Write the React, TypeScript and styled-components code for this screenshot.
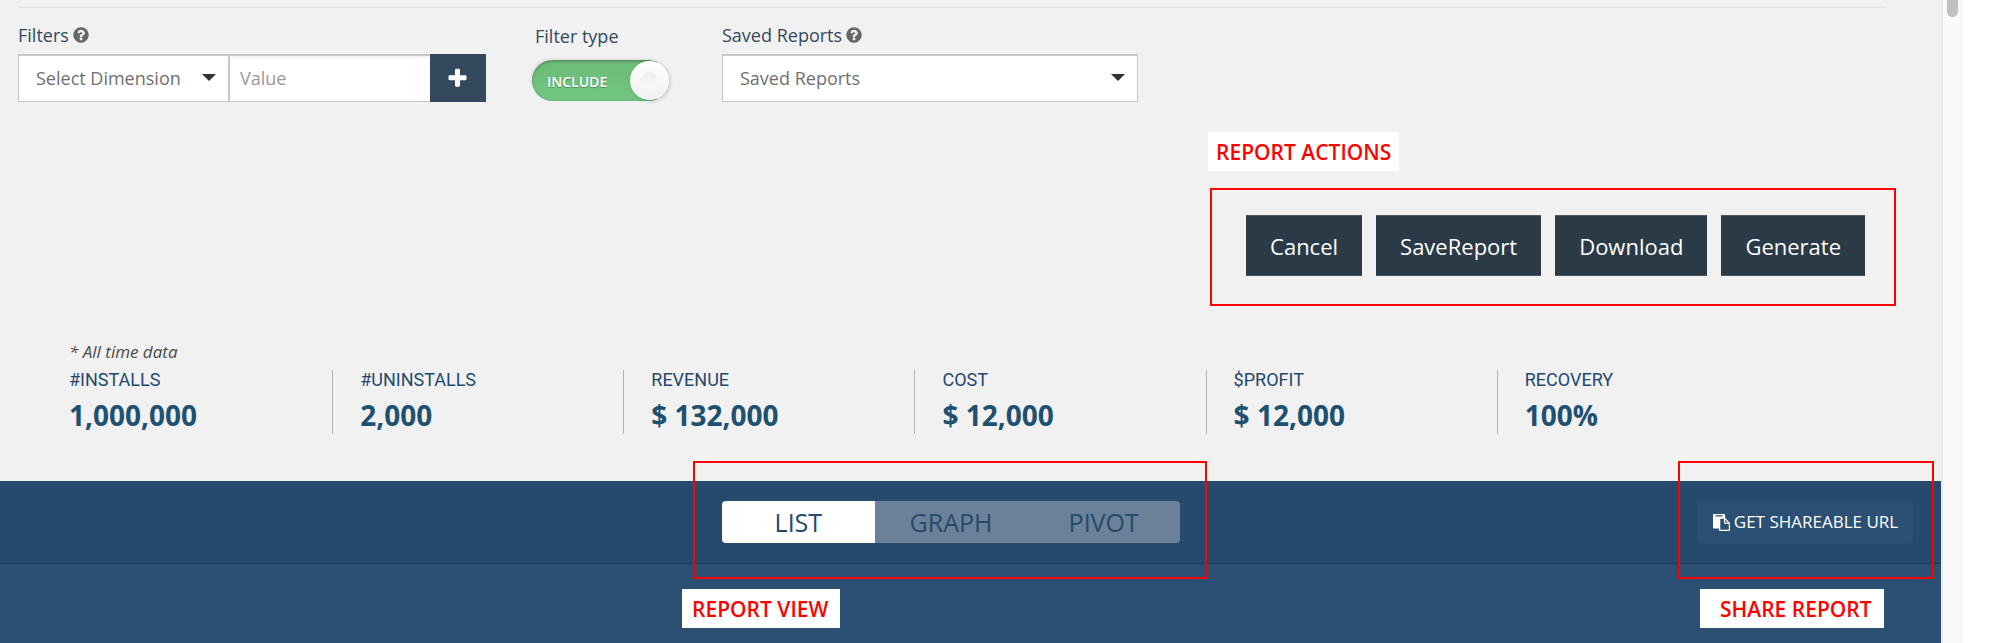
import React, { useState } from "react";
import styled, { createGlobalStyle, css } from "styled-components";

const GlobalStyle = createGlobalStyle`
  *, *::before, *::after { box-sizing: border-box; }
  body { margin: 0; background: #fff; font-family: "Open Sans", "Noto Sans", sans-serif; }
  button, input, select { font-family: inherit; }
`;

const Window = styled.div`
  display: flex;
  min-height: 100vh;
  padding-right: 38px;
`;

const Main = styled.main`
  flex: 1;
  min-width: 0;
  display: flex;
  flex-direction: column;
  background: #f1f1f1;
`;

const ScrollTrack = styled.div`
  width: 21px;
  flex: none;
  display: flex;
  justify-content: center;
  align-items: flex-start;
  background: #fafafa;
  border-left: 2px solid #e7e7e7;
  border-right: 1px solid #ececec;
`;

const ScrollThumb = styled.div`
  width: 11px;
  height: 17px;
  border-radius: 0 0 6px 6px;
  background: #c1c1c1;
`;

const Rule = styled.hr`
  margin: 7px 55px 0 18px;
  border: 0;
  border-top: 1px solid #e0e0e0;
`;

const Filters = styled.form`
  display: flex;
  align-items: flex-start;
  padding: 14px 18px 0;
`;

const Field = styled.div<{ $width: number; $gap?: number }>`
  width: ${(p) => p.$width}px;
  margin-right: ${(p) => p.$gap ?? 0}px;
`;

const FieldLabel = styled.label`
  display: flex;
  align-items: center;
  gap: 3px;
  height: 26px;
  margin-bottom: 6px;
  font-size: 18px;
  line-height: 26px;
  color: #34495e;
  svg { fill: #666; }
`;

const ToggleTitle = styled.div`
  padding: 1px 0 0 3px;
  margin-bottom: 11px;
  font-size: 18px;
  line-height: 26px;
  color: #34495e;
`;

const InputGroup = styled.div`
  display: flex;
  height: 48px;
`;

const SelectWrap = styled.div<{ $width?: number }>`
  position: relative;
  height: 48px;
  width: ${(p) => (p.$width ? `${p.$width}px` : "100%")};
  svg {
    position: absolute;
    right: 13px;
    top: 20px;
    fill: #333;
    pointer-events: none;
  }
`;

const Select = styled.select`
  appearance: none;
  width: 100%;
  height: 100%;
  padding: 0 30px 2px 17px;
  border: 1px solid #c8c8c8;
  border-top-width: 2px;
  border-radius: 0;
  background: #fff;
  color: #707070;
  font-size: 18px;
`;

const ValueInput = styled.input`
  flex: 1;
  min-width: 0;
  padding: 0 10px 2px;
  border: 1px solid #c8c8c8;
  border-top-width: 2px;
  border-right: 0;
  border-radius: 0;
  box-shadow: inset 0 2px 2px #0000000d;
  font-size: 18px;
  color: #555;
  &::placeholder { color: #999; opacity: 1; }
`;

const AddButton = styled.button`
  width: 56px;
  display: flex;
  align-items: center;
  justify-content: center;
  padding: 0 2px 0 0;
  border: 0;
  background: #34495e;
  svg { fill: #fff; }
`;

const Toggle = styled.label`
  display: flex;
  align-items: center;
  position: relative;
  width: 137px;
  height: 41px;
  padding: 2px 0 0 15px;
  border-radius: 21px;
  background: linear-gradient(#6dbb78, #72c681) 0 0 / 125px 100% no-repeat;
  box-shadow: -2px -2px 2px #e4e4e4;
  color: #fff;
  font-size: 14px;
  font-weight: 600;
  line-height: 20px;
  text-shadow: 0 1px 1px #0000004d;
  &::before {
    content: "";
    position: absolute;
    inset: 0 2px 0 0;
    border-radius: 21px;
    box-shadow: inset 0 1px 3px #00000059;
  }
  input {
    position: absolute;
    inset: 0;
    margin: 0;
    opacity: 0;
  }
`;

const Knob = styled.span<{ $on: boolean }>`
  position: absolute;
  top: 1px;
  ${(p) => (p.$on ? css`right: 0;` : css`left: 0;`)}
  display: flex;
  align-items: center;
  justify-content: center;
  width: 39px;
  height: 39px;
  border-radius: 50%;
  background: linear-gradient(#fff, #f0f0f0);
  box-shadow: 1px 1px 4px #00000033;
  &::before {
    content: "";
    width: 17px;
    height: 17px;
    border-radius: 50%;
    background: linear-gradient(#eee, #fbfbfb);
  }
`;

const Actions = styled.section`
  align-self: flex-end;
  display: flex;
  flex-direction: column;
  align-items: flex-start;
  margin: 30px 45px 0 0;
`;

const Callout = styled.strong<{ $left?: number; $right?: number }>`
  display: block;
  height: 39px;
  padding: 0 ${(p) => p.$right ?? 8}px 0 ${(p) => p.$left ?? 8}px;
  background: #fff;
  color: #f00;
  font-size: 21px;
  font-weight: 600;
  line-height: 40px;
  white-space: nowrap;
`;

const ActionFrame = styled.div`
  display: flex;
  gap: 14px;
  margin: 17px 0 0 2px;
  padding: 25px 29px 28px 34px;
  border: 2px solid #f00;
`;

const ActionButton = styled.button`
  height: 61px;
  padding: 0 24px;
  border: 1px solid #4a5763;
  border-width: 1px 0;
  background: #2b3a47;
  color: #fff;
  font-size: 22px;
`;

const StatsSection = styled.section`
  width: 90%;
  margin: 35px 0 47px 42px;
`;

const StatsNote = styled.em`
  display: block;
  padding-left: 27px;
  height: 29px;
  font-size: 17px;
  line-height: 22px;
  color: #4a4a4a;
`;

const Stats = styled.dl`
  display: grid;
  grid-template-columns: repeat(6, 1fr);
  margin: 0;
`;

const Stat = styled.div`
  height: 64px;
  padding-left: 27px;
  border-right: 1px solid #b5b5b5;
  color: #24496e;
  &:last-child { border-right: 0; }
  dt {
    font-family: Roboto, sans-serif;
    font-size: 18px;
    line-height: 20px;
  }
  dd {
    margin: 6px 0 0;
    font-size: 28px;
    font-weight: 700;
    line-height: 38px;
    color: #205070;
  }
`;

const ViewBar = styled.div`
  display: grid;
  grid-template-columns: 704px auto 1fr;
  align-items: center;
  height: 83px;
  padding: 0 28px 0 18px;
  background: #264a6d;
  border-bottom: 1px solid #1d3a58;
`;

const ReportBody = styled.div`
  flex: 1;
  min-height: 79px;
  background: #2c5073;
`;

const Annotated = styled.div<{ $column: number }>`
  position: relative;
  grid-column: ${(p) => p.$column};
  justify-self: ${(p) => (p.$column === 3 ? "end" : "start")};
`;

const Frame = styled.div<{ $left: number; $right: number }>`
  position: absolute;
  top: -40px;
  bottom: -36px;
  left: -${(p) => p.$left}px;
  right: -${(p) => p.$right}px;
  border: 2px solid #f00;
  pointer-events: none;
`;

const CalloutSpot = styled.div<{ $left: number }>`
  position: absolute;
  top: 88px;
  left: ${(p) => p.$left}px;
`;

const Segments = styled.div`
  display: flex;
  width: 458px;
  height: 42px;
  border-radius: 4px;
  overflow: hidden;
  background: #6a8199;
`;

const Segment = styled.button<{ $active: boolean }>`
  flex: 1;
  padding: 0;
  border: 0;
  background: ${(p) => (p.$active ? "#fff" : "transparent")};
  color: #264a6d;
  font-size: 25px;
  line-height: 42px;
`;

const ShareButton = styled.button`
  display: flex;
  align-items: center;
  justify-content: center;
  gap: 4px;
  width: 215px;
  height: 42px;
  padding: 0;
  border: 0;
  border-radius: 4px;
  background: #2c5073;
  color: #fff;
  font-size: 17px;
  line-height: 24px;
  white-space: nowrap;
  svg { fill: #fff; }
`;

const HelpIcon = () => (
  <svg width="18" height="18" viewBox="0 0 1792 1792" aria-hidden="true">
    <path d="M1024 1376v-192q0-14-9-23t-23-9h-192q-14 0-23 9t-9 23v192q0 14 9 23t23 9h192q14 0 23-9t9-23zm256-672q0-88-55.5-163t-138.5-116-170-41q-243 0-371 213-15 24 8 42l132 100q7 6 19 6 16 0 25-12 53-68 86-92 34-24 86-24 48 0 85.5 26t37.5 59q0 38-20 61t-68 45q-63 28-115.5 86.5t-52.5 125.5v36q0 14 9 23t23 9h192q14 0 23-9t9-23q0-19 21.5-49.5t54.5-49.5q32-18 49-28.5t46-35 44.5-48 28-60.5 12.5-81zm384 192q0 209-103 385.5t-279.5 279.5-385.5 103-385.5-103-279.5-279.5-103-385.5 103-385.5 279.5-279.5 385.5-103 385.5 103 279.5 279.5 103 385.5z" />
  </svg>
);

const PlusIcon = () => (
  <svg width="23" height="23" viewBox="0 0 1792 1792" aria-hidden="true">
    <path d="M1600 736v192q0 40-28 68t-68 28h-416v416q0 40-28 68t-68 28h-192q-40 0-68-28t-28-68v-416h-416q-40 0-68-28t-28-68v-192q0-40 28-68t68-28h416v-416q0-40 28-68t68-28h192q40 0 68 28t28 68v416h416q40 0 68 28t28 68z" />
  </svg>
);

const PasteIcon = () => (
  <svg width="17" height="17" viewBox="0 0 1792 1792" aria-hidden="true">
    <path d="M768 1664h896v-640h-416q-40 0-68-28t-28-68v-416h-384v1152zm256-1440v-64q0-13-9.5-22.5t-22.5-9.5h-704q-13 0-22.5 9.5t-9.5 22.5v64q0 13 9.5 22.5t22.5 9.5h704q13 0 22.5-9.5t9.5-22.5zm256 672h299l-299-299v299zm512 128v672q0 40-28 68t-68 28h-960q-40 0-68-28t-28-68v-160h-544q-40 0-68-28t-28-68v-1344q0-40 28-68t68-28h1088q40 0 68 28t28 68v328q21 13 36 28l408 408q28 28 48 76t20 88z" />
  </svg>
);

const Caret = () => (
  <svg width="14" height="7" viewBox="0 0 14 7" aria-hidden="true">
    <path d="M0 0h14L7 7z" />
  </svg>
);

const STATS = [
  { label: "#INSTALLS", value: "1,000,000" },
  { label: "#UNINSTALLS", value: "2,000" },
  { label: "REVENUE", value: "$ 132,000" },
  { label: "COST", value: "$ 12,000" },
  { label: "$PROFIT", value: "$ 12,000" },
  { label: "RECOVERY", value: "100%" },
];

const ACTIONS = ["Cancel", "SaveReport", "Download", "Generate"];
const VIEWS = ["LIST", "GRAPH", "PIVOT"];

export default function App() {
  const [include, setInclude] = useState(true);
  const [view, setView] = useState("LIST");

  return (
    <Window>
      <GlobalStyle />
      <Main>
        <Rule />
        <Filters onSubmit={(e) => e.preventDefault()}>
          <Field $width={468} $gap={46}>
            <FieldLabel htmlFor="dimension">
              Filters <HelpIcon />
            </FieldLabel>
            <InputGroup>
              <SelectWrap $width={211}>
                <Select id="dimension">
                  <option>Select Dimension</option>
                </Select>
                <Caret />
              </SelectWrap>
              <ValueInput placeholder="Value" aria-label="Value" />
              <AddButton type="button" aria-label="Add filter">
                <PlusIcon />
              </AddButton>
            </InputGroup>
          </Field>
          <Field $width={144} $gap={46}>
            <ToggleTitle>Filter type</ToggleTitle>
            <Toggle>
              <input
                type="checkbox"
                checked={include}
                onChange={(e) => setInclude(e.target.checked)}
              />
              INCLUDE
              <Knob $on={include} />
            </Toggle>
          </Field>
          <Field $width={416}>
            <FieldLabel htmlFor="saved">
              Saved Reports <HelpIcon />
            </FieldLabel>
            <SelectWrap>
              <Select id="saved">
                <option>Saved Reports</option>
              </Select>
              <Caret />
            </SelectWrap>
          </Field>
        </Filters>

        <Actions>
          <Callout>REPORT ACTIONS</Callout>
          <ActionFrame>
            {ACTIONS.map((name) => (
              <ActionButton key={name} type="button">
                {name}
              </ActionButton>
            ))}
          </ActionFrame>
        </Actions>

        <StatsSection>
          <StatsNote>* All time data</StatsNote>
          <Stats>
            {STATS.map((s) => (
              <Stat key={s.label}>
                <dt>{s.label}</dt>
                <dd>{s.value}</dd>
              </Stat>
            ))}
          </Stats>
        </StatsSection>

        <ViewBar>
          <Annotated $column={2}>
            <Segments>
              {VIEWS.map((v) => (
                <Segment
                  key={v}
                  type="button"
                  $active={v === view}
                  aria-pressed={v === view}
                  onClick={() => setView(v)}
                >
                  {v}
                </Segment>
              ))}
            </Segments>
            <Frame $left={29} $right={27} />
            <CalloutSpot $left={-40}>
              <Callout $left={10} $right={12}>REPORT VIEW</Callout>
            </CalloutSpot>
          </Annotated>
          <Annotated $column={3}>
            <ShareButton type="button">
              <PasteIcon />
              GET SHAREABLE URL
            </ShareButton>
            <Frame $left={20} $right={21} />
            <CalloutSpot $left={2}>
              <Callout $left={20} $right={12}>SHARE REPORT</Callout>
            </CalloutSpot>
          </Annotated>
        </ViewBar>
        <ReportBody />
      </Main>
      <ScrollTrack>
        <ScrollThumb />
      </ScrollTrack>
    </Window>
  );
}
